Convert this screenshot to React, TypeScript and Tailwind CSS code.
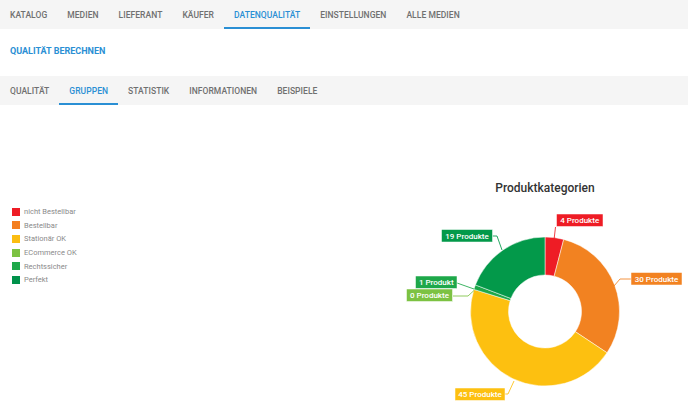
import React from "react";

function Tabs({ items, active }: { items: string[]; active: string }) {
  return (
    <div className="flex h-[29px] items-stretch bg-[#f5f5f5]">
      {items.map((t) => (
        <div
          key={t}
          className={
            "flex items-center px-[10px] text-[8.5px] tracking-[0.05px] font-medium border-b-2 pt-[3px] " +
            (t === active ? "border-[#2a8fd4] text-[#2a8fd4]" : "border-transparent text-[#707070]")
          }
        >
          {t}
        </div>
      ))}
    </div>
  );
}

const legend = [
  { c: "#ee1c25", t: "nicht Bestellbar" },
  { c: "#f47f20", t: "Bestellbar" },
  { c: "#fbbd12", t: "Stationär OK" },
  { c: "#7cc242", t: "ECommerce OK" },
  { c: "#1ea84a", t: "Rechtssicher" },
  { c: "#00924b", t: "Perfekt" },
];

const CX = 545;
const CY = 311.5;
const RO = 74.5;
const RI = 36.5;

function pt(r: number, deg: number) {
  const a = ((deg - 90) * Math.PI) / 180;
  return [CX + r * Math.cos(a), CY + r * Math.sin(a)];
}

function arc(a0: number, a1: number) {
  const large = a1 - a0 > 180 ? 1 : 0;
  const [x0, y0] = pt(RO, a0);
  const [x1, y1] = pt(RO, a1);
  const [x2, y2] = pt(RI, a1);
  const [x3, y3] = pt(RI, a0);
  return `M${x0} ${y0} A${RO} ${RO} 0 ${large} 1 ${x1} ${y1} L${x2} ${y2} A${RI} ${RI} 0 ${large} 0 ${x3} ${y3} Z`;
}

const slices = [
  { v: 4, c: "#ee1c25" },
  { v: 30, c: "#f28221" },
  { v: 45, c: "#fdc010" },
  { v: 0, c: "#7cc242" },
  { v: 1, c: "#1ea84a" },
  { v: 19, c: "#03994a" },
];

const labels = [
  { t: "4 Produkte", c: "#ee1c25", x: 556.5, y: 214, w: 46.5, line: "555.5,227 554,240" },
  { t: "30 Produkte", c: "#f28221", x: 631, y: 272.5, w: 51, line: "631,279 620,279 614,286" },
  { t: "45 Produkte", c: "#fdc010", x: 455, y: 388, w: 50, line: "505,394 508,394 514,381" },
  { t: "19 Produkte", c: "#03994a", x: 441.5, y: 229.5, w: 51, line: "492.5,236 497,236 502,250" },
  { t: "1 Produkt", c: "#1ea84a", x: 415.5, y: 276, w: 41.5, line: "457,283 474,289" },
  { t: "0 Produkte", c: "#7cc242", x: 406.5, y: 289, w: 46, line: "453,296 468,296 474,290.5" },
];

function Chart() {
  let acc = 0;
  const total = slices.reduce((s, x) => s + x.v, 0);
  return (
    <svg width="300" height="307" viewBox="388 105 300 307" className="block">
      <text
        x={545}
        y={192}
        textAnchor="middle"
        fontSize="12"
        fontWeight="500"
        fill="#333333"
        fontFamily="Roboto, sans-serif"
      >
        Produktkategorien
      </text>
      {slices.map((s, i) => {
        const a0 = (acc / total) * 360;
        acc += s.v;
        const a1 = (acc / total) * 360;
        if (s.v === 0) return null;
        return <path key={i} d={arc(a0, a1)} fill={s.c} stroke="#ffffff" strokeWidth="0.5" />;
      })}
      {labels.map((l) => (
        <g key={l.t}>
          <polyline points={l.line} fill="none" stroke={l.c} strokeWidth="1" opacity="0.85" />
          <rect x={l.x} y={l.y} width={l.w} height={12.5} fill={l.c} stroke="#ffffff" strokeWidth="0.5" />
          <text
            x={l.x + l.w / 2}
            y={l.y + 9.2}
            textAnchor="middle"
            fontSize="8"
            fontWeight="500"
            fill="#ffffff"
            fontFamily="Roboto, sans-serif"
          >
            {l.t}
          </text>
        </g>
      ))}
    </svg>
  );
}

export default function App() {
  return (
    <div className="w-[688px] h-[412px] overflow-hidden bg-white font-['Roboto',sans-serif]">
      <Tabs
        items={["KATALOG", "MEDIEN", "LIEFERANT", "KÄUFER", "DATENQUALITÄT", "EINSTELLUNGEN", "ALLE MEDIEN"]}
        active="DATENQUALITÄT"
      />
      <div className="flex h-[47px] items-center px-[10px] pb-[2px]">
        <span className="text-[9px] font-bold text-[#2a8fd4]">QUALITÄT BERECHNEN</span>
      </div>
      <Tabs items={["QUALITÄT", "GRUPPEN", "STATISTIK", "INFORMATIONEN", "BEISPIELE"]} active="GRUPPEN" />
      <div className="flex h-[307px]">
        <div className="w-[388px] flex-none pt-[100px] pl-[12px]">
          {legend.map((l) => (
            <div key={l.t} className="flex h-[13.66px] items-center gap-[4px]">
              <div className="h-[8px] w-[8px] flex-none" style={{ backgroundColor: l.c }} />
              <span className="text-[7.5px] leading-none text-[#8a8a8a]">{l.t}</span>
            </div>
          ))}
        </div>
        <Chart />
      </div>
    </div>
  );
}
